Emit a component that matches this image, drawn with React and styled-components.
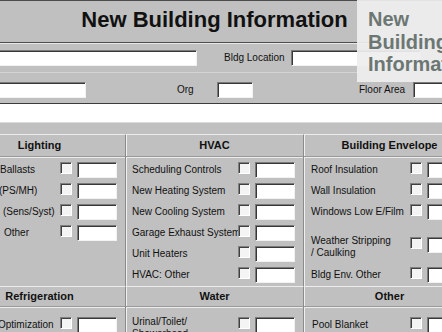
import React from "react";
import styled, { createGlobalStyle } from "styled-components";

const GlobalStyle = createGlobalStyle`
  html, body { margin: 0; padding: 0; background: #c0c0c0; }
  body { font-family: "Liberation Sans", Arial, sans-serif; color: #111; }
  #root { width: 442px; height: 332px; overflow: hidden; }
`;

const Page = styled.div`
  position: relative;
  width: 442px;
  height: 332px;
  overflow: hidden;
  background: #c0c0c0;
`;

const Form = styled.div`
  width: 521px;
  margin-left: -46px;
`;

const TitleBar = styled.h1`
  margin: 0;
  box-sizing: border-box;
  height: 43px;
  padding-top: 8px;
  border-top: 1px solid #4c4c4c;
  border-bottom: 1px solid #4c4c4c;
  text-align: center;
  font: bold 22px/22px "Liberation Sans", Arial, sans-serif;
  color: #111;
`;

const Fields = styled.div`
  border-top: 1px solid #e9e9e9;
  border-bottom: 1px solid #3c3c3c;
`;

const FieldRow = styled.div`
  display: flex;
  align-items: flex-start;
  box-sizing: border-box;
  height: ${(p) => p.$h}px;
  padding-top: ${(p) => p.$pt}px;
  border-bottom: ${(p) => (p.$divider ? "1px solid #d4d4d4" : "none")};
`;

const FieldLabel = styled.label`
  flex: none;
  width: ${(p) => p.$w}px;
  margin-left: ${(p) => p.$ml || 0}px;
  font-size: 10px;
  line-height: 16px;
  white-space: nowrap;
`;

const TextBox = styled.input`
  flex: none;
  box-sizing: border-box;
  width: ${(p) => p.$w}px;
  height: 16px;
  margin: 0 0 0 ${(p) => p.$ml || 0}px;
  padding: 0;
  border: 1px solid;
  border-color: #7a7a7a #f2f2f2 #f2f2f2 #7a7a7a;
  box-shadow: inset 1px 1px 0 #383838;
  background: #fff;
  outline: none;
`;

const WhiteBand = styled.div`
  height: 18px;
  background: #fff;
  border-bottom: 1px solid #dadada;
`;

const Sections = styled.div`
  display: grid;
  grid-template-columns: 172px 178px 171px;
  grid-template-rows: 152px 46px;
  margin-top: 11px;
`;

const Section = styled.section`
  box-sizing: border-box;
  border-top: 1px solid #ececec;
  border-right: ${(p) => (p.$divider ? "1px solid #8a8a8a" : "none")};
  box-shadow: inset 1px 0 0 #f0f0f0;
`;

const SectionTitle = styled.h2`
  margin: 0;
  height: ${(p) => p.$h}px;
  line-height: ${(p) => p.$h}px;
  text-align: center;
  font: bold 11px/${(p) => p.$h}px "Liberation Sans", Arial, sans-serif;
  color: #111;
  border-bottom: 1px solid #9a9a9a;
  box-shadow: 0 1px 0 #ececec;
`;

const SectionBody = styled.div`
  padding-top: ${(p) => p.$pt}px;
`;

const Row = styled.div`
  display: flex;
  box-sizing: border-box;
  height: ${(p) => p.$h}px;
  padding: 0 8px 0 ${(p) => p.$pl}px;
`;

const Label = styled.span`
  flex: 1;
  min-width: 0;
  margin-left: ${(p) => p.$indent || 0}px;
  padding-top: ${(p) => p.$pt || 0}px;
  align-self: ${(p) => (p.$pt ? "flex-start" : "center")};
  font-size: 10px;
  line-height: 12px;
  white-space: pre;
  color: #111;
`;

const Controls = styled.div`
  flex: none;
  display: flex;
  align-items: flex-start;
  gap: 5px;
  padding-top: ${(p) => p.$pt}px;
`;

const Check = styled.span`
  display: block;
  box-sizing: border-box;
  width: 12px;
  height: 12px;
  background: #f4f4f4;
  border: 1px solid;
  border-color: #808080 #ffffff #ffffff #808080;
  box-shadow: inset 1px 1px 0 #404040;
`;

const Overlay = styled.div`
  position: absolute;
  top: 0;
  left: 357px;
  box-sizing: border-box;
  width: 130px;
  height: 82px;
  padding: 8px 0 0 11px;
  background: rgba(238, 238, 238, 0.93);
  color: #6c7773;
  font: bold 20px/22.5px "Liberation Sans", Arial, sans-serif;
  overflow: hidden;
`;

const upper = [
  {
    title: "Lighting",
    pl: 6,
    divider: true,
    rows: [
      { label: "Ballasts", indent: 40 },
      { label: "(PS/MH)", indent: 39 },
      { label: "(Sens/Syst)", indent: 43 },
      { label: "Other", indent: 44 },
    ],
  },
  {
    title: "HVAC",
    pl: 6,
    divider: true,
    rows: [
      { label: "Scheduling Controls" },
      { label: "New Heating System" },
      { label: "New Cooling System" },
      { label: "Garage Exhaust System" },
      { label: "Unit Heaters" },
      { label: "HVAC: Other" },
    ],
  },
  {
    title: "Building Envelope",
    pl: 7,
    rows: [
      { label: "Roof Insulation" },
      { label: "Wall Insulation" },
      { label: "Windows Low E/Film" },
      { label: "Weather Stripping\n/ Caulking", tall: true, pt: 13 },
      { label: "Bldg Env. Other" },
    ],
  },
];

const lower = [
  { title: "Refrigeration", pl: 6, divider: true, rows: [{ label: "Optimization", indent: 38 }] },
  { title: "Water", pl: 6, divider: true, rows: [{ label: "Urinal/Toilet/\nShowerhead", pt: 2 }] },
  { title: "Other", pl: 8, rows: [{ label: "Pool Blanket" }] },
];

function SectionBlock({ sec, titleH, bodyPt }) {
  return (
    <Section $divider={sec.divider}>
      <SectionTitle $h={titleH}>{sec.title}</SectionTitle>
      <SectionBody $pt={bodyPt}>
        {sec.rows.map((r, i) => (
          <Row key={i} $h={r.tall ? 42 : 21} $pl={sec.pl}>
            <Label $indent={r.indent} $pt={r.pt}>{r.label}</Label>
            <Controls $pt={r.tall ? 15 : 3}>
              <Check role="checkbox" aria-checked="false" />
              <TextBox $w={40} type="text" aria-label={r.label} />
            </Controls>
          </Row>
        ))}
      </SectionBody>
    </Section>
  );
}

export default function App() {
  return (
    <Page>
      <GlobalStyle />
      <Form>
        <TitleBar>New Building Information</TitleBar>
        <Fields>
          <FieldRow $h={29} $pt={6} $divider>
            <TextBox $w={227} $ml={16} type="text" aria-label="Bldg Name" />
            <FieldLabel $w={67} $ml={27}>Bldg Location</FieldLabel>
            <TextBox $w={130} type="text" aria-label="Bldg Location" />
          </FieldRow>
          <FieldRow $h={30} $pt={9}>
            <TextBox $w={116} $ml={16} type="text" aria-label="Address" />
            <FieldLabel $w={40} $ml={91}>Org</FieldLabel>
            <TextBox $w={36} type="text" aria-label="Org" />
            <FieldLabel $w={54} $ml={106}>Floor Area</FieldLabel>
            <TextBox $w={60} type="text" aria-label="Floor Area" />
          </FieldRow>
        </Fields>
        <WhiteBand />
        <Sections>
          {upper.map((s) => (
            <SectionBlock key={s.title} sec={s} titleH={21} bodyPt={2} />
          ))}
          {lower.map((s) => (
            <SectionBlock key={s.title} sec={s} titleH={19} bodyPt={7} />
          ))}
        </Sections>
      </Form>
      <Overlay>New Building Information</Overlay>
    </Page>
  );
}
